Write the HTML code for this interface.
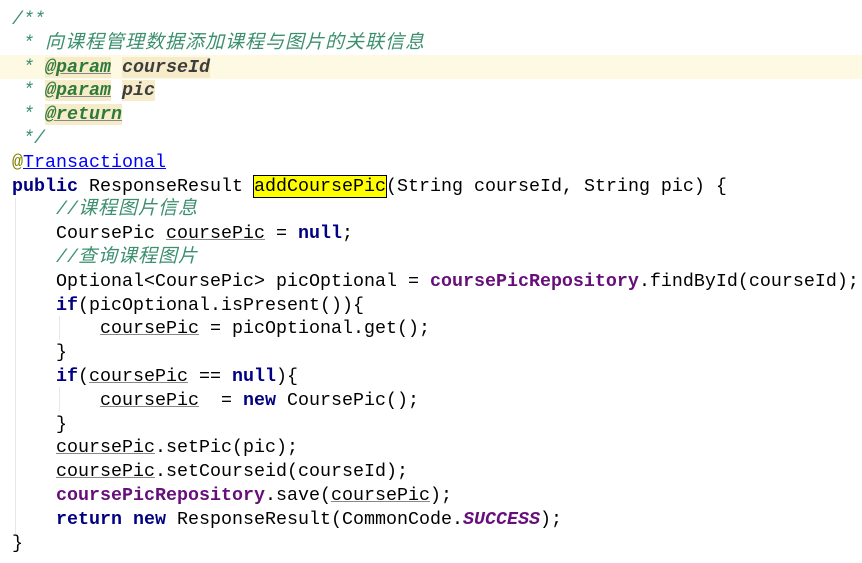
<!DOCTYPE html>
<html><head><meta charset="utf-8"><style>
body{margin:0;width:862px;height:563px;background:#fff;overflow:hidden;position:relative}
pre{margin:0;position:absolute;left:12px;top:8px;font-family:"Liberation Mono",monospace;font-size:18.33px;line-height:23.8px;color:#000;white-space:pre}
.c{color:#3c8f6f;font-style:italic}
.cj{font-family:"Noto Sans CJK SC",sans-serif;font-size:19px;letter-spacing:1px;line-height:10px}
.tag{color:#2f7a3a;font-weight:bold;font-style:italic;text-decoration:underline;text-decoration-color:#888;background:#f6ecc9}
.pn{color:#3d3d3d;font-weight:bold;font-style:italic;background:#f6ecc9}
.k{color:#000080;font-weight:bold}
.f{color:#660e7a;font-weight:bold}
.u{text-decoration:underline;text-decoration-color:#888}
.hl{background:#ffff00;outline:1px solid #000}
.a{color:#808000}
.lnk{color:#0000ff;text-decoration:underline}
.cur{position:absolute;left:0;top:55px;width:862px;height:24px;background:#fdf9e3}
.g{position:absolute;width:1px;background:#e8e8e8}
</style></head><body>
<div class="cur"></div>
<div class="g" style="left:15px;top:198px;height:336px"></div>
<div class="g" style="left:59px;top:316px;height:24px"></div>
<div class="g" style="left:59px;top:387px;height:24px"></div>
<pre><span class="c">/**
 * <span class="cj">向课程管理数据添加课程与图片的关联信息</span></span>
<span class="c"> * </span><span class="tag">@param</span> <span class="pn">courseId</span>
<span class="c"> * </span><span class="tag">@param</span> <span class="pn">pic</span>
<span class="c"> * </span><span class="tag">@return</span>
<span class="c"> */</span>
<span class="a">@</span><span class="lnk">Transactional</span>
<span class="k">public</span> ResponseResult <span class="hl">addCoursePic</span>(String courseId, String pic) {
    <span class="c">//<span class="cj">课程图片信息</span></span>
    CoursePic <span class="u">coursePic</span> = <span class="k">null</span>;
    <span class="c">//<span class="cj">查询课程图片</span></span>
    Optional&lt;CoursePic&gt; picOptional = <span class="f">coursePicRepository</span>.findById(courseId);
    <span class="k">if</span>(picOptional.isPresent()){
        <span class="u">coursePic</span> = picOptional.get();
    }
    <span class="k">if</span>(<span class="u">coursePic</span> == <span class="k">null</span>){
        <span class="u">coursePic</span>  = <span class="k">new</span> CoursePic();
    }
    <span class="u">coursePic</span>.setPic(pic);
    <span class="u">coursePic</span>.setCourseid(courseId);
    <span class="f">coursePicRepository</span>.save(<span class="u">coursePic</span>);
    <span class="k">return new</span> ResponseResult(CommonCode.<span class="f" style="font-style:italic">SUCCESS</span>);
}</pre>
</body></html>
